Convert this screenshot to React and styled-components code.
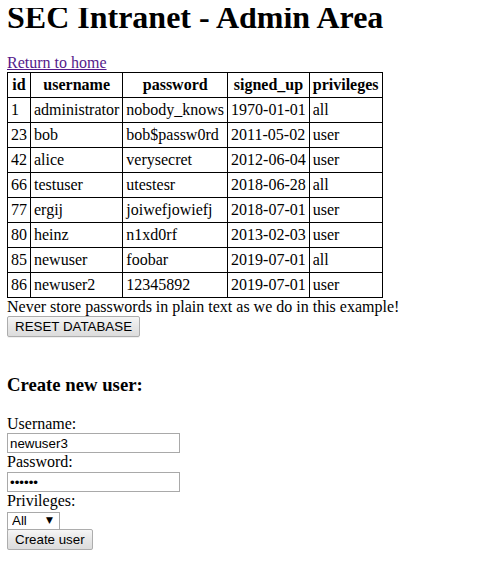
import React from "react";
import styled, { createGlobalStyle } from "styled-components";

const GlobalStyle = createGlobalStyle`
  body {
    margin: 8px 8px 8px 7px;
    font-family: "Liberation Serif", "Times New Roman", serif;
    font-size: 16px;
    color: #000;
    background: #fff;
  }
`;

const Title = styled.h1`
  font-size: 32px;
  font-weight: bold;
  margin: -9px 0 18px;
`;

const HomeLink = styled.a`
  display: block;
  color: #551a8b;
  text-decoration: underline;
  line-height: 18px;
`;

const Table = styled.table`
  border-collapse: collapse;
  border: 1px solid #000;
`;

const Th = styled.th`
  border: 1px solid #000;
  padding: 3px;
  line-height: 18px;
  font-weight: bold;
  text-align: center;
`;

const Td = styled.td`
  border: 1px solid #000;
  padding: 3px;
  line-height: 18px;
  text-align: left;
  white-space: nowrap;
`;

const Note = styled.div`
  line-height: 18px;
`;

const Button = styled.button`
  font-family: Arial, "Liberation Sans", sans-serif;
  font-size: 13.33px;
  color: #000;
  height: 21px;
  padding: 0 7px;
  border: 1px solid #adadad;
  border-radius: 2px;
  background: linear-gradient(#f6f6f6, #e8e8e8 45%, #dcdcdc);
  box-shadow: 0 1px 0 rgba(0, 0, 0, 0.06);
  cursor: pointer;
`;

const Spacer = styled.div`
  height: 18px;
`;

const SubTitle = styled.h3`
  font-size: 18.72px;
  font-weight: bold;
  margin: 19px 0;
`;

const Form = styled.form`
  display: flex;
  flex-direction: column;
  align-items: flex-start;
`;

const Label = styled.label`
  line-height: 18px;
  display: block;
`;

const TextInput = styled.input`
  box-sizing: border-box;
  width: 173px;
  height: 20px;
  margin: ${(p) => p.$mt || 0}px 0 0;
  padding: 1px 2px;
  border: 1px solid #a9a9a9;
  font-family: Arial, "Liberation Sans", sans-serif;
  font-size: 13.33px;
  color: #000;
  outline: none;
`;

const SelectWrap = styled.div`
  position: relative;
  width: 53px;
  height: 18px;
  margin-top: 1px;
`;

const Select = styled.select`
  appearance: none;
  box-sizing: border-box;
  width: 53px;
  height: 18px;
  padding: 0 0 0 4px;
  border: 1px solid #a9a9a9;
  background: #fff;
  font-family: Arial, "Liberation Sans", sans-serif;
  font-size: 13.33px;
  color: #000;
  outline: none;
`;

const Arrow = styled.span`
  position: absolute;
  right: 7px;
  top: 3px;
  font-size: 9px;
  line-height: 12px;
  font-family: "DejaVu Sans", sans-serif;
  pointer-events: none;
`;

const users = [
  ["1", "administrator", "nobody_knows", "1970-01-01", "all"],
  ["23", "bob", "bob$passw0rd", "2011-05-02", "user"],
  ["42", "alice", "verysecret", "2012-06-04", "user"],
  ["66", "testuser", "utestesr", "2018-06-28", "all"],
  ["77", "ergij", "joiwefjowiefj", "2018-07-01", "user"],
  ["80", "heinz", "n1xd0rf", "2013-02-03", "user"],
  ["85", "newuser", "foobar", "2019-07-01", "all"],
  ["86", "newuser2", "12345892", "2019-07-01", "user"],
];

const headers = ["id", "username", "password", "signed_up", "privileges"];

export default function App() {
  return (
    <>
      <GlobalStyle />
      <Title>SEC Intranet - Admin Area</Title>
      <HomeLink href="#">Return to home</HomeLink>
      <Table>
        <thead>
          <tr>
            {headers.map((h) => (
              <Th key={h}>{h}</Th>
            ))}
          </tr>
        </thead>
        <tbody>
          {users.map((u) => (
            <tr key={u[0]}>
              {u.map((c, i) => (
                <Td key={i}>{c}</Td>
              ))}
            </tr>
          ))}
        </tbody>
      </Table>
      <Note>Never store passwords in plain text as we do in this example!</Note>
      <Button type="button">RESET DATABASE</Button>
      <Spacer />
      <SubTitle>Create new user:</SubTitle>
      <Form onSubmit={(e) => e.preventDefault()}>
        <Label>Username:</Label>
        <TextInput type="text" defaultValue="newuser3" />
        <Label>Password:</Label>
        <TextInput type="password" defaultValue="foobar" $mt={1} />
        <Label>Privileges:</Label>
        <SelectWrap>
          <Select defaultValue="all">
            <option value="all">All</option>
            <option value="user">User</option>
          </Select>
          <Arrow>▼</Arrow>
        </SelectWrap>
        <Button type="submit">Create user</Button>
      </Form>
    </>
  );
}
